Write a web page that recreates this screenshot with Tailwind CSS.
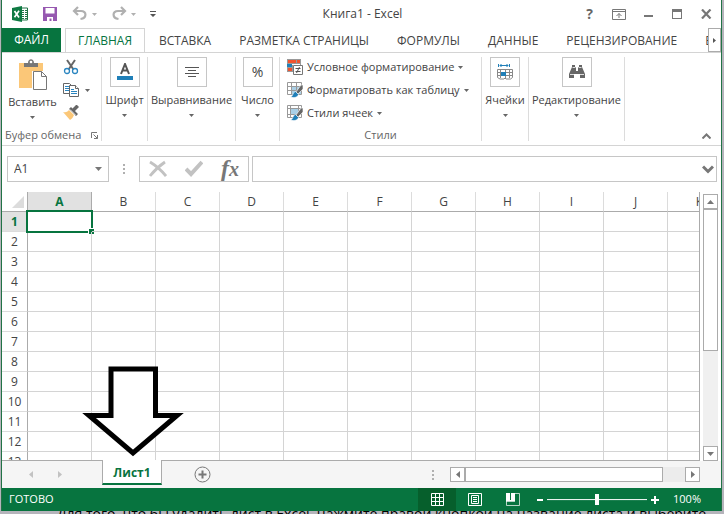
<!DOCTYPE html>
<html lang="ru">
  <head>
    <meta charset="utf-8" />
    <meta name="viewport" content="width=device-width, initial-scale=1.0" />
    <script src="https://cdn.jsdelivr.net/npm/@tailwindcss/browser@4"></script>
    <title>Книга1 - Excel</title>
  </head>
  <body class="font-['Open_Sans','Noto_Sans',sans-serif] text-xs text-[#444]">
    <div class="h-screen flex flex-col overflow-hidden bg-[#b5b4bb] pl-px pr-[2px]">
      <!-- Window -->
      <main class="relative flex-1 min-h-0 flex flex-col bg-white border-x border-[#217346]">
        <!-- Title bar -->
        <header class="h-7 shrink-0 flex items-center justify-between pl-[10px] pr-2">
          <div class="flex-1 flex items-center">
            <svg class="w-4 h-4" viewBox="0 0 16 16">
              <path d="M9 2h6.500v12H9" fill="#fff" stroke="#217346" />
              <path d="M10 4.500h2M13 4.500h2M10 6.500h2M13 6.500h2M10 8.500h2M13 8.500h2M10 10.500h2M13 10.500h2M10 12.500h2M13 12.500h2" stroke="#217346" />
              <path d="M0 2L10 0v16L0 14z" fill="#0f7a43" />
              <path d="M2.500 5l4.500 6.500M7 4.800L2.500 11.300" stroke="#fff" stroke-width="1.700" />
            </svg>
            <button class="ml-[14px]" aria-label="Сохранить">
              <svg class="w-4 h-4" viewBox="0 0 16 16">
                <path d="M1 1h14v14H1z" fill="#9658b0" />
                <path d="M3.500 2h9v5.500h-9zM5 11h6v4H9.500v-2.500H7.500V15H5z" fill="#fff" />
              </svg>
            </button>
            <button class="ml-[14px] flex items-center gap-1" aria-label="Отменить">
              <svg class="w-4 h-4" viewBox="0 0 16 16" fill="none" stroke="#b0b0b0" stroke-width="2.200">
                <path d="M6 1L2 5l4 4M2.500 5H9c6 0 6 7-.5 8" />
              </svg>
              <svg class="w-[5px] h-[3px]" viewBox="0 0 5 3"><path d="M0 0h5L2.500 3z" fill="#b0b0b0" /></svg>
            </button>
            <button class="ml-[14px] flex items-center gap-1" aria-label="Вернуть">
              <svg class="w-4 h-4" viewBox="0 0 16 16" fill="none" stroke="#b0b0b0" stroke-width="2.200">
                <path d="M10 1l4 4-4 4M13.500 5H7C1 5 1 12 7.500 13" />
              </svg>
              <svg class="w-[5px] h-[3px]" viewBox="0 0 5 3"><path d="M0 0h5L2.500 3z" fill="#b0b0b0" /></svg>
            </button>
            <button class="ml-[14px]" aria-label="Настройка панели">
              <svg class="w-[6px] h-[6px]" viewBox="0 0 6 6"><path d="M0 0h6v1H0zM0 3h6L3 6z" fill="#555" /></svg>
            </button>
          </div>
          <h1>Книга1 - Excel</h1>
          <div class="flex-1 flex items-center justify-end gap-[15px]">
            <button class="mr-1 text-sm font-bold text-[#666]" aria-label="Справка">?</button>
            <button aria-label="Параметры ленты">
              <svg class="w-[14px] h-[11px]" viewBox="0 0 14 11" fill="none" stroke="#777">
                <path d="M.5.5h13v10H.5zM.5 2.500h13M7 9V4.500M4.500 7L7 4.500 9.500 7" />
              </svg>
            </button>
            <button aria-label="Свернуть">
              <svg class="w-[14px] h-[10px]" viewBox="0 0 14 10"><path d="M3 6h9v2H3z" fill="#777" /></svg>
            </button>
            <button aria-label="Развернуть">
              <svg class="w-[14px] h-[10px]" viewBox="0 0 14 10"><path d="M2 0h10v10H2zM3 3v6h8V3z" fill="#777" fill-rule="evenodd" /></svg>
            </button>
            <button aria-label="Закрыть">
              <svg class="w-[14px] h-[10px]" viewBox="0 0 14 10"><path d="M3 .5l8.500 9M11.500.5L3 9.500" stroke="#777" stroke-width="2.200" /></svg>
            </button>
          </div>
        </header>

        <!-- Tabs -->
        <nav class="h-[25px] shrink-0 flex overflow-hidden border-b border-[#d4d4d4]">
          <button class="w-[59px] shrink-0 bg-[#07743f] text-white">ФАЙЛ</button>
          <div class="flex-1 min-w-0 flex pl-1 overflow-hidden whitespace-nowrap">
            <button class="h-[25px] w-20 shrink-0 bg-white border-x border-t border-[#d4d4d4] text-[#07743f]">ГЛАВНАЯ</button>
            <button class="shrink-0 px-[14px] pt-px">ВСТАВКА</button>
            <button class="shrink-0 px-[14px] pt-px">РАЗМЕТКА СТРАНИЦЫ</button>
            <button class="shrink-0 px-[14px] pt-px">ФОРМУЛЫ</button>
            <button class="shrink-0 px-[14px] pt-px">ДАННЫЕ</button>
            <button class="shrink-0 px-[14px] pt-px">РЕЦЕНЗИРОВАНИЕ</button>
            <button class="shrink-0 px-[14px] pt-px">ВИД</button>
          </div>
          <button class="w-[13px] shrink-0 flex items-center justify-center border border-[#ababab]" aria-label="Вправо">
            <svg class="w-[3px] h-[5px]" viewBox="0 0 3 5"><path d="M0 0l3 2.500L0 5z" fill="#555" /></svg>
          </button>
        </nav>

        <!-- Ribbon -->
        <section class="h-[93px] shrink-0 flex py-1 border-b border-[#d4d4d4] whitespace-nowrap text-[11px]">
          <div class="w-[100px] flex flex-col justify-between border-r border-[#dcdcdc]">
            <div class="flex">
              <button class="w-[61px] flex flex-col items-center pt-px">
                <svg class="w-7 h-8" viewBox="0 0 28 32">
                  <path d="M0 5h24v25H0z" fill="#fbc778" />
                  <path d="M5 9V5h4c0-5 6-5 6 0h4v4z" fill="#777" />
                  <circle cx="12" cy="4" r="1.300" fill="#fff" />
                  <path d="M13 13h11v19H13z" fill="#fff" />
                  <path d="M14.500 13.500h8l5 5v13h-13z" fill="#fff" stroke="#777" />
                  <path d="M22.500 13.500v5h5" fill="none" stroke="#777" />
                </svg>
                <span class="mt-1 leading-4">Вставить</span>
                <svg class="mt-[6px] w-[5px] h-[3px]" viewBox="0 0 5 3"><path d="M0 0h5L2.500 3z" fill="#666" /></svg>
              </button>
              <div class="flex flex-col gap-[7px] pt-[2px]">
                <button aria-label="Вырезать">
                  <svg class="w-4 h-4" viewBox="0 0 16 16" fill="none">
                    <path d="M4 1l6.500 9.500M12 1L5.500 10.500" stroke="#666" stroke-width="2" />
                    <circle cx="4" cy="12" r="2.500" stroke="#2a85c0" stroke-width="1.300" />
                    <circle cx="12" cy="12" r="2.500" stroke="#2a85c0" stroke-width="1.300" />
                  </svg>
                </button>
                <button class="flex items-center gap-[6px]" aria-label="Копировать">
                  <svg class="w-4 h-4" viewBox="0 0 16 16" fill="#fff" stroke="#666">
                    <path d="M.5 1.500h6l2 2v8h-8z" />
                    <path d="M2 4.500h4M2 6.500h4M2 8.500h4" stroke="#2a85c0" />
                    <path d="M6.500 3.500h6l3 3v8h-9z" />
                    <path d="M12.500 3.500v3h3" />
                    <path d="M8 7.500h3M8 9.500h6M8 11.500h6" stroke="#2a85c0" />
                  </svg>
                  <svg class="w-[5px] h-[3px]" viewBox="0 0 5 3"><path d="M0 0h5L2.500 3z" fill="#666" /></svg>
                </button>
                <button aria-label="Формат по образцу">
                  <svg class="w-4 h-4" viewBox="0 0 16 16">
                    <path d="M0 7c3 1 5-.5 6-2l5 5c-1 2-2 4-4 5z" fill="#fbc778" />
                    <path d="M6 4l2-2 7 7-2 2zM9.500 3.500L13 0l1 0 2 2-4 4z" fill="#666" />
                    <path d="M7 4.500l5.500 5.500" stroke="#fff" stroke-width=".8" />
                  </svg>
                </button>
              </div>
            </div>
            <div class="flex items-center justify-between pl-[3px] pr-[3px] leading-3 text-[#666]">
              Буфер обмена
              <button aria-label="Буфер обмена: параметры">
                <svg class="w-[7px] h-[7px]" viewBox="0 0 7 7" fill="none" stroke="#777"><path d="M.5 6V.5H6M2.500 2.500l4 4M6.500 3v3.500H3" /></svg>
              </button>
            </div>
          </div>
          <button class="w-[46px] flex flex-col items-center border-r border-[#dcdcdc]">
            <span class="w-[30px] h-[30px] flex items-center justify-center border border-[#c6c6c6]">
              <svg class="w-4 h-[18px]" viewBox="0 0 16 18">
                <path d="M4 11L8 1l4 10M5.500 7.500h5" fill="none" stroke="#555" stroke-width="2" />
                <path d="M0 13h16v4H0z" fill="#1f7fb8" />
              </svg>
            </span>
            <span class="mt-[5px] leading-4">Шрифт</span>
            <svg class="mt-[6px] w-[5px] h-[3px]" viewBox="0 0 5 3"><path d="M0 0h5L2.500 3z" fill="#666" /></svg>
          </button>
          <button class="w-[88px] flex flex-col items-center border-r border-[#dcdcdc]">
            <span class="w-[30px] h-[30px] flex items-center justify-center border border-[#c6c6c6]">
              <svg class="w-[14px] h-[10px]" viewBox="0 0 14 10" stroke="#555"><path d="M0 .5h14M3 3.500h8M0 6.500h14M3 9.500h8" /></svg>
            </span>
            <span class="mt-[5px] leading-4">Выравнивание</span>
            <svg class="mt-[6px] w-[5px] h-[3px]" viewBox="0 0 5 3"><path d="M0 0h5L2.500 3z" fill="#666" /></svg>
          </button>
          <button class="w-11 flex flex-col items-center border-r border-[#dcdcdc]">
            <span class="w-[30px] h-[30px] flex items-center justify-center border border-[#c6c6c6] text-sm">%</span>
            <span class="mt-[5px] leading-4">Число</span>
            <svg class="mt-[6px] w-[5px] h-[3px]" viewBox="0 0 5 3"><path d="M0 0h5L2.500 3z" fill="#666" /></svg>
          </button>
          <div class="w-[202px] flex flex-col justify-between border-r border-[#dcdcdc]">
            <div class="flex flex-col gap-[7px] pl-[7px] pt-[2px]">
              <button class="h-4 flex items-center gap-1">
                <svg class="w-4 h-4 shrink-0" viewBox="0 0 16 16">
                  <path d="M0 0h14v6H6v7H0z" fill="#999" />
                  <path d="M1 1h8v3H1zM1 9h4v3H1z" fill="#f1542f" />
                  <path d="M5 5h8v1H5z" fill="#fff" />
                  <path d="M0 5h5v3H0z" fill="#1f7fb8" />
                  <path d="M10 1h3v3h-3z" fill="#f1542f" />
                  <path d="M6.500 6.500h9v9h-9z" fill="#fff" stroke="#777" />
                  <path d="M8.500 9.500h5M8.500 12.500h5M12.500 8l-3 6" stroke="#555" />
                </svg>
                Условное форматирование
                <svg class="w-[5px] h-[3px] shrink-0" viewBox="0 0 5 3"><path d="M0 0h5L2.500 3z" fill="#666" /></svg>
              </button>
              <button class="h-4 flex items-center gap-1">
                <svg class="w-4 h-4 shrink-0" viewBox="0 0 16 16">
                  <path d="M.5.5h14v12H.5z" fill="#fff" stroke="#999" />
                  <path d="M5 5h9v7H5z" fill="#a9cfe6" />
                  <path d="M0 4.500h14M0 8.500h14M4.500 0v12M9.500 0v12" stroke="#999" />
                  <path d="M16 3v4l-5 5-2-2 5-7z" fill="#666" stroke="#fff" stroke-width=".6" />
                  <path d="M8.500 9.500l3 3c-1 3-4 3.500-8 2.500 3-1 2-5 5-5.500z" fill="#1f7fb8" stroke="#fff" stroke-width=".6" />
                </svg>
                Форматировать как таблицу
                <svg class="w-[5px] h-[3px] shrink-0" viewBox="0 0 5 3"><path d="M0 0h5L2.500 3z" fill="#666" /></svg>
              </button>
              <button class="h-4 flex items-center gap-1">
                <svg class="w-4 h-4 shrink-0" viewBox="0 0 16 16">
                  <path d="M.5.5h14v12H.5z" fill="#fff" stroke="#999" />
                  <path d="M0 3.500h14M0 9.500h14M3.500 0v12M11.500 0v12" stroke="#999" />
                  <path d="M4 4h7v5H4z" fill="#a9cfe6" />
                  <path d="M16 3v4l-5 5-2-2 5-7z" fill="#666" stroke="#fff" stroke-width=".6" />
                  <path d="M8.500 9.500l3 3c-1 3-4 3.500-8 2.500 3-1 2-5 5-5.500z" fill="#1f7fb8" stroke="#fff" stroke-width=".6" />
                </svg>
                Стили ячеек
                <svg class="w-[5px] h-[3px] shrink-0" viewBox="0 0 5 3"><path d="M0 0h5L2.500 3z" fill="#666" /></svg>
              </button>
            </div>
            <div class="text-center leading-3 text-[#666]">Стили</div>
          </div>
          <button class="w-[47px] flex flex-col items-center border-r border-[#dcdcdc]">
            <span class="w-[30px] h-[30px] flex items-center justify-center border border-[#c6c6c6]">
              <svg class="w-4 h-4" viewBox="0 0 16 16" fill="none" stroke="#888">
                <path d="M1.500 0v3M12.500 0v3M3 1.500h8M4.500 0L3 1.500 4.500 3M9.500 0L11 1.500 9.500 3" stroke="#1f7fb8" />
                <path d="M.5 5.500h15v8l-2 1.500H9L8 14l-1 1H3l-2.500-1.500zM0 8.500h15M0 11.500h15M3.500 5v9M8.500 5v9M12.500 5v9" />
                <path d="M4 8h5v4H4z" fill="#1f7fb8" stroke="none" />
              </svg>
            </span>
            <span class="mt-[5px] leading-4">Ячейки</span>
            <svg class="mt-[6px] w-[5px] h-[3px]" viewBox="0 0 5 3"><path d="M0 0h5L2.500 3z" fill="#666" /></svg>
          </button>
          <button class="w-24 flex flex-col items-center border-r border-[#dcdcdc]">
            <span class="w-[30px] h-[30px] flex items-center justify-center border border-[#c6c6c6]">
              <svg class="w-4 h-4" viewBox="0 0 16 16">
                <path d="M3 1h3v2h1v4h2V3h1V1h3v2l3 7v4h-5v-4H5v4H0v-4l3-7z" fill="#666" />
                <path d="M3.500 3.500h3M9.500 3.500h3M1 10.500h4M11 10.500h4" stroke="#ddd" />
                <path d="M7.500 4h1v2h-1z" fill="#fff" />
              </svg>
            </span>
            <span class="mt-[5px] leading-4">Редактирование</span>
            <svg class="mt-[6px] w-[5px] h-[3px]" viewBox="0 0 5 3"><path d="M0 0h5L2.500 3z" fill="#666" /></svg>
          </button>
          <div class="flex-1 flex items-end justify-end pr-[10px] pb-[2px]">
            <button aria-label="Свернуть ленту">
              <svg class="w-[9px] h-[6px]" viewBox="0 0 9 6" fill="none" stroke="#777" stroke-width="2"><path d="M.5 5.500l4-4 4 4" /></svg>
            </button>
          </div>
        </section>

        <!-- Formula bar -->
        <section class="h-[46px] shrink-0 flex items-start pt-[10px] pl-[5px] pr-1">
          <div class="w-[102px] h-[26px] flex items-center border border-[#c6c6c6] pl-[6px] pr-[6px]">
            <input class="flex-1 min-w-0 outline-none" type="text" value="A1" aria-label="Имя" />
            <button aria-label="Список имён">
              <svg class="w-[7px] h-1" viewBox="0 0 7 4"><path d="M0 0h7L3.500 4z" fill="#777" /></svg>
            </button>
          </div>
          <svg class="ml-[14px] mr-[14px] mt-2 w-[2px] h-[10px]" viewBox="0 0 2 10"><path d="M0 0h2v2H0zM0 4h2v2H0zM0 8h2v2H0z" fill="#b0b0b0" /></svg>
          <div class="w-[110px] h-[26px] flex items-center justify-between border border-[#c6c6c6] px-[9px]">
            <button aria-label="Отмена">
              <svg class="w-[18px] h-[18px]" viewBox="0 0 18 18" fill="none" stroke="#c2c2c2" stroke-width="2.800"><path d="M1 2c5 3 11 8 16 14M16 2C10 6 5 11 1 16" /></svg>
            </button>
            <button aria-label="Ввод">
              <svg class="w-[18px] h-[18px]" viewBox="0 0 18 18" fill="none" stroke="#c2c2c2" stroke-width="4"><path d="M1 9l5 5L17 2" /></svg>
            </button>
            <button class="font-['Liberation_Serif',serif] text-2xl leading-6 font-bold italic text-[#777]" aria-label="Вставить функцию">f<span class="text-xl">x</span></button>
          </div>
          <div class="ml-[3px] flex-1 h-[26px] flex items-center border border-[#c6c6c6] pr-[2px]">
            <input class="flex-1 min-w-0 outline-none px-1" type="text" aria-label="Строка формул" />
            <button aria-label="Развернуть строку формул">
              <svg class="w-3 h-[9px]" viewBox="0 0 12 9" fill="none" stroke="#777" stroke-width="3"><path d="M1 1.500l5 5 5-5" /></svg>
            </button>
          </div>
        </section>

        <!-- Sheet -->
        <section class="flex-1 min-h-0 flex bg-[#f5f5f5]">
          <div class="flex-1 min-w-0 overflow-hidden bg-white border-r border-b border-[#ababab]">
            <table class="table-fixed w-[730px] border-separate border-spacing-0 text-center">
              <thead>
                <tr id="columns" class="h-5">
                  <th class="w-[26px] p-0 border-r border-b border-[#ababab]">
                    <svg class="ml-[10px] w-3 h-3" viewBox="0 0 12 12"><path d="M12 0v12H0z" fill="#dcdcdc" /></svg>
                  </th>
                </tr>
              </thead>
              <tbody id="rows"></tbody>
            </table>
          </div>
          <div class="w-[21px] shrink-0 bg-white flex flex-col items-center pt-[2px]">
            <button class="w-[15px] h-[15px] flex items-center justify-center bg-white border border-[#ababab]" aria-label="Вверх">
              <svg class="w-[7px] h-1" viewBox="0 0 7 4"><path d="M0 4h7L3.500 0z" fill="#777" /></svg>
            </button>
            <div class="w-[15px] flex-1 bg-[#f0f0f0]">
              <div class="h-[60%] bg-white border border-[#ababab]"></div>
            </div>
            <button class="w-[15px] h-[15px] flex items-center justify-center bg-white border border-[#ababab]" aria-label="Вниз">
              <svg class="w-[7px] h-1" viewBox="0 0 7 4"><path d="M0 0h7L3.500 4z" fill="#777" /></svg>
            </button>
          </div>
        </section>

        <!-- Sheet tabs -->
        <section class="h-[27px] shrink-0 flex bg-[#f5f5f5]">
          <button class="ml-[27px] self-center" aria-label="Предыдущий лист">
            <svg class="w-1 h-[7px]" viewBox="0 0 4 7"><path d="M4 0v7L0 3.500z" fill="#c2c2c2" /></svg>
          </button>
          <button class="ml-[25px] self-center" aria-label="Следующий лист">
            <svg class="w-1 h-[7px]" viewBox="0 0 4 7"><path d="M0 0v7l4-3.500z" fill="#c2c2c2" /></svg>
          </button>
          <button class="relative -mt-px ml-10 w-[60px] h-[25px] pt-[2px] bg-white border-x border-x-[#ababab] border-b-2 border-b-[#07743f] font-bold text-[#07743f]">Лист1</button>
          <button class="ml-8 self-center" aria-label="Новый лист">
            <svg class="w-[17px] h-[17px]" viewBox="0 0 17 17" fill="none" stroke="#777"><circle cx="8.500" cy="8.500" r="7.500" /><path d="M8.500 4.500v8M4.500 8.500h8" stroke-width="2" /></svg>
          </button>
          <div class="flex-1"></div>
          <svg class="self-center mr-4 w-[2px] h-[10px]" viewBox="0 0 2 10"><path d="M0 0h2v2H0zM0 4h2v2H0zM0 8h2v2H0z" fill="#b0b0b0" /></svg>
          <div class="w-[250px] h-[15px] self-center flex mr-[21px] bg-[#ececec]">
            <button class="w-[15px] flex items-center justify-center bg-white border border-[#ababab]" aria-label="Влево">
              <svg class="w-1 h-[7px]" viewBox="0 0 4 7"><path d="M4 0v7L0 3.500z" fill="#777" /></svg>
            </button>
            <div class="w-[198px] bg-white border border-[#ababab]"></div>
            <div class="flex-1"></div>
            <button class="w-[15px] flex items-center justify-center bg-white border border-[#ababab]" aria-label="Вправо">
              <svg class="w-1 h-[7px]" viewBox="0 0 4 7"><path d="M0 0v7l4-3.500z" fill="#777" /></svg>
            </button>
          </div>
        </section>

        <!-- Status bar -->
        <footer class="h-[23px] shrink-0 flex items-center bg-[#07743f] pl-[7px] pr-5 text-[11px] text-white">
          <span>ГОТОВО</span>
          <div class="flex-1"></div>
          <button class="w-[38px] h-full flex items-center justify-center bg-[#065f2c]" aria-label="Обычный">
            <svg class="w-[13px] h-[13px]" viewBox="0 0 13 13" fill="none" stroke="#fff"><path d="M.5.5h12v12H.5zM4.500 0v13M8.500 0v13M0 4.500h13M0 8.500h13" /></svg>
          </button>
          <button class="w-[38px] h-full flex items-center justify-center" aria-label="Разметка страницы">
            <svg class="w-[14px] h-[13px]" viewBox="0 0 14 13" fill="none" stroke="#fff"><path d="M.5.5h13v12h-13zM3.500 2.500h7v8h-7zM5 4.500h4M5 6.500h4M5 8.500h4" /></svg>
          </button>
          <button class="w-[38px] h-full flex items-center justify-center" aria-label="Страничный режим">
            <svg class="w-[14px] h-[13px]" viewBox="0 0 14 13"><path d="M0 0h4v7h1V0h4v8H0z" fill="#fff" /><path d="M.5 8v4.500h13V.5H9M0 8.500h9" fill="none" stroke="#fff" stroke-opacity=".7" /></svg>
          </button>
          <button class="ml-[5px]" aria-label="Уменьшить">
            <svg class="w-[6px] h-2" viewBox="0 0 6 8"><path d="M0 3h6v2H0z" fill="#fff" /></svg>
          </button>
          <input
            type="range"
            value="50"
            aria-label="Масштаб"
            class="mx-1 w-[100px] h-3 appearance-none bg-linear-to-b from-transparent from-45% via-white via-45% to-transparent to-55% [&::-webkit-slider-thumb]:appearance-none [&::-webkit-slider-thumb]:w-1 [&::-webkit-slider-thumb]:h-[11px] [&::-webkit-slider-thumb]:bg-white"
          />
          <button aria-label="Увеличить">
            <svg class="w-2 h-2" viewBox="0 0 8 8"><path d="M0 3h3V0h2v3h3v2H5v3H3V5H0z" fill="#fff" /></svg>
          </button>
          <span class="ml-[14px]">100%</span>
        </footer>

        <!-- Arrow to the sheet tab -->
        <svg class="absolute left-20 bottom-[54px] w-[103px] h-[91px]" viewBox="0 0 103 91">
          <path d="M29 3h44.500v46.500H95L51 87 7 49.500h22z" fill="#fff" stroke="#000" stroke-width="5" stroke-miterlimit="6" />
        </svg>
      </main>

      <!-- Document behind the window -->
      <div class="h-[3px] shrink-0 overflow-hidden pl-14 whitespace-nowrap text-sm leading-[14px] text-black">
        <p class="-mt-1">Для того, что бы удалить лист в Excel, нажмите правой кнопкой на название листа и выберите</p>
      </div>
    </div>

    <script>
      const columns = ["A", "B", "C", "D", "E", "F", "G", "H", "I", "J", "K"];
      const columnsDOM = document.getElementById("columns");
      const rowsDOM = document.getElementById("rows");

      columns.forEach((name, i) => {
        const look = i === 0 ? "bg-[#e1e1e1] font-bold text-[#07743f] border-r-[#ababab]" : "font-normal border-r-[#dcdcdc]";
        columnsDOM.innerHTML += `<th class="w-16 p-0 leading-[19px] border-r border-b border-b-[#ababab] ${look}">${name}</th>`;
      });

      let result = "";
      for (let row = 1; row <= 13; row++) {
        const look = row === 1 ? "bg-[#e1e1e1] font-bold text-[#07743f]" : "font-normal";
        result += `<tr class="h-5"><th class="p-0 leading-[19px] border-r border-b border-r-[#ababab] border-b-[#dcdcdc] ${look}">${row}</th>`;
        columns.forEach((name, i) => {
          // active cell frame with its fill handle
          const frame =
            row === 1 && i === 0
              ? `<div class="absolute -inset-[2px] border-2 border-[#07743f]"></div><div class="absolute -right-[3px] -bottom-[3px] w-[6px] h-[6px] bg-[#07743f] border-l border-t border-white"></div>`
              : "";
          result += `<td class="relative p-0 border-r border-b border-[#d4d4d4]">${frame}</td>`;
        });
        result += "</tr>";
      }
      rowsDOM.innerHTML = result;
    </script>
  </body>
</html>
